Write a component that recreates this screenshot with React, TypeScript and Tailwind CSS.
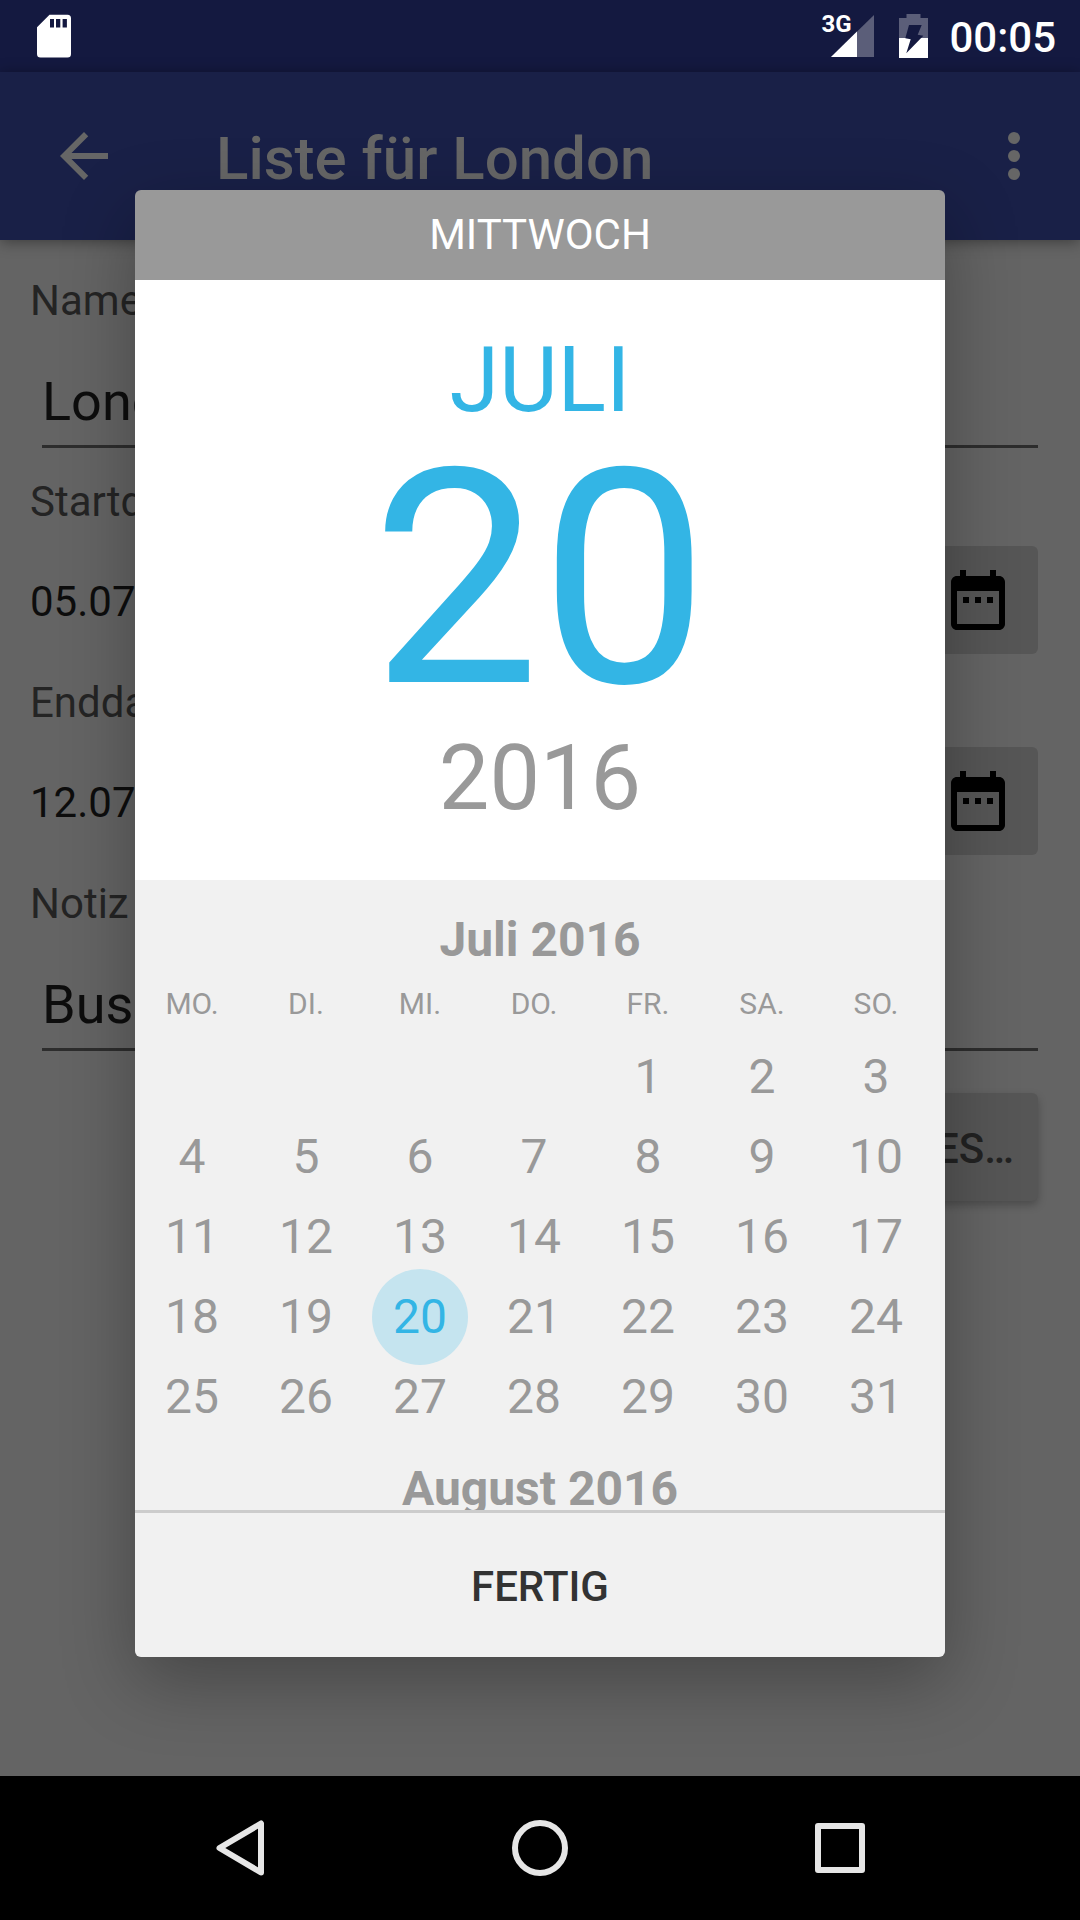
import type { ReactNode } from "react";

const WEEKDAYS = ["MO.", "DI.", "MI.", "DO.", "FR.", "SA.", "SO."];
const FIRST_WEEKDAY = 4;
const DAYS_IN_MONTH = 31;
const SELECTED_DAY = 20;

const weeks: (number | null)[][] = [];
for (let start = 1 - FIRST_WEEKDAY; start <= DAYS_IN_MONTH; start += 7) {
  weeks.push(
    WEEKDAYS.map((_, i) => {
      const day = start + i;
      return day >= 1 && day <= DAYS_IN_MONTH ? day : null;
    }),
  );
}

function StatusBar() {
  return (
    <div className="flex h-[72px] items-center bg-[#141940] pl-9 pr-6 text-white">
      <svg className="h-11 w-9" viewBox="0 0 36 44" aria-hidden="true">
        <path
          d="M13.5 0.7H31.5A3.5 3.5 0 0 1 35 4.2V40A3.5 3.5 0 0 1 31.5 43.5H4.5A3.5 3.5 0 0 1 1 40V13.2Z"
          fill="#fff"
        />
        <path d="M14 5h4v8.500h-4zM20 5h4.300v8.500h-4.300zM26.600 5h4.300v8.500h-4.300z" fill="#141940" />
      </svg>
      <div className="ml-auto flex items-center">
        <div className="relative">
          <span className="absolute -left-2.5 -top-0.5 text-[24px] font-bold leading-6">3G</span>
          <svg className="h-11 w-11" viewBox="0 0 44 44" aria-hidden="true">
            <path d="M43 1V43H0Z" fill="#5b5e79" />
            <path d="M26 17.600V43H0Z" fill="#fff" />
          </svg>
        </div>
        <svg className="ml-6 h-11 w-[30px]" viewBox="0 0 30 44" aria-hidden="true">
          <path d="M7.500 0H21.500V4H29V24H0V4H7.500Z" fill="#5b5e79" />
          <path d="M0 24H29V44H0Z" fill="#fff" />
          <path d="M10 11H22.700L18.700 20.700L24.300 21.700L7.300 39.300L11.700 25.300L6.300 24.300Z" fill="#141940" />
        </svg>
        <span className="ml-5 pt-1 text-[42px] font-medium leading-[48px]">00:05</span>
      </div>
    </div>
  );
}

function AppBar() {
  return (
    <header className="relative flex h-[168px] items-center bg-[#192047] pl-12 pr-[30px] text-[#666] shadow-[0_2px_14px_rgba(0,0,0,0.4)]">
      <button type="button" aria-label="Zurück">
        <svg className="size-[72px]" viewBox="0 0 24 24" fill="currentColor" aria-hidden="true">
          <path d="M20 11H7.830l5.590-5.590L12 4l-8 8 8 8 1.410-1.410L7.830 13H20v-2z" />
        </svg>
      </button>
      <h1 className="ml-24 flex-1 truncate pt-1.5 text-[60px] font-medium leading-[72px]">
        Liste für London
      </h1>
      <button type="button" aria-label="Weitere Optionen">
        <svg className="size-[72px]" viewBox="0 0 24 24" fill="currentColor" aria-hidden="true">
          <circle cx="12" cy="6" r="2" />
          <circle cx="12" cy="12" r="2" />
          <circle cx="12" cy="18" r="2" />
        </svg>
      </button>
    </header>
  );
}

function TextField({ id, label, value }: { id: string; label: string; value: string }) {
  return (
    <div className="flex flex-col">
      <label htmlFor={id} className="text-[42px] leading-[48px] text-[#242424]">
        {label}
      </label>
      <input
        id={id}
        type="text"
        defaultValue={value}
        className="mx-3 mt-11 h-[79px] border-b-[3px] border-[#2d2d2d] bg-transparent pb-3 text-[54px] leading-[64px] text-[#0d0d0d] outline-none"
      />
    </div>
  );
}

function DateField({ label, value }: { label: string; value: string }) {
  return (
    <div>
      <div className="text-[42px] leading-[48px] text-[#242424]">{label}</div>
      <div className="mt-5 flex items-center justify-between pr-3">
        <span className="pt-1 text-[42px] leading-[48px] text-[#0d0d0d]">{value}</span>
        <button
          type="button"
          aria-label={`${label} wählen`}
          className="flex h-[108px] items-center rounded-md bg-[#565656] px-6"
        >
          <svg className="size-[72px]" viewBox="0 0 24 24" fill="#000" aria-hidden="true">
            <path d="M9 11H7v2h2v-2zm4 0h-2v2h2v-2zm4 0h-2v2h2v-2zm2-7h-1V2h-2v2H8V2H6v2H5c-1.110 0-1.990.9-1.990 2L3 20c0 1.100.89 2 2 2h14c1.100 0 2-.9 2-2V6c0-1.100-.9-2-2-2zm0 16H5V9h14v11z" />
          </svg>
        </button>
      </div>
    </div>
  );
}

function TripForm() {
  return (
    <form className="px-[30px] pt-[37px]">
      <TextField id="name" label="Name" value="London" />
      <div className="mt-[30px]">
        <DateField label="Startdatum" value="05.07.2016" />
      </div>
      <div className="mt-[25px]">
        <DateField label="Enddatum" value="12.07.2016" />
      </div>
      <div className="mt-[25px]">
        <TextField id="note" label="Notiz" value="Business" />
      </div>
      <div className="mt-[42px] flex justify-end pr-3">
        <button
          type="button"
          className="h-[108px] rounded-md bg-[#565656] px-6 pt-0.5 text-[42px] font-medium text-[#222] shadow-[0_4px_8px_rgba(0,0,0,0.25)]"
        >
          WEITERES…
        </button>
      </div>
    </form>
  );
}

function MonthTitle({ children }: { children: ReactNode }) {
  return <h2 className="text-center text-[48px] font-bold leading-[56px]">{children}</h2>;
}

function Calendar() {
  return (
    <div className="h-[630px] overflow-hidden bg-[#f1f1f1] pt-8 text-[#999]">
      <MonthTitle>Juli 2016</MonthTitle>
      <div className="mt-[18px] pr-3">
        <table className="w-full table-fixed text-center">
          <thead>
            <tr>
              {WEEKDAYS.map((day) => (
                <th key={day} scope="col" className="p-0 pb-[15px] text-[30px] font-normal leading-9">
                  {day}
                </th>
              ))}
            </tr>
          </thead>
          <tbody>
            {weeks.map((week, w) => (
              <tr key={w}>
                {week.map((day, d) => (
                  <td key={d} className="h-20 p-0">
                    {day !== null && (
                      <button
                        type="button"
                        aria-pressed={day === SELECTED_DAY}
                        className={
                          day === SELECTED_DAY
                            ? "relative mx-auto block h-20 w-24 text-[48px] leading-[80px] text-[#33b5e5]"
                            : "relative mx-auto block h-20 w-24 text-[48px] leading-[80px]"
                        }
                      >
                        {day === SELECTED_DAY && (
                          <span className="absolute inset-x-0 -inset-y-2 rounded-full bg-[#c5e4ef]" />
                        )}
                        <span className="relative">{day}</span>
                      </button>
                    )}
                  </td>
                ))}
              </tr>
            ))}
          </tbody>
        </table>
      </div>
      <div className="mt-6">
        <MonthTitle>August 2016</MonthTitle>
      </div>
    </div>
  );
}

function DatePickerDialog() {
  return (
    <div className="absolute inset-0 flex items-center justify-center pb-px">
      <div
        role="dialog"
        aria-label="Datum wählen"
        className="w-3/4 overflow-hidden rounded-md shadow-[0_24px_72px_rgba(0,0,0,0.3)]"
      >
        <div className="bg-[#999] text-center text-[42px] leading-[90px] text-white">MITTWOCH</div>
        <div className="flex h-[600px] flex-col items-center justify-center gap-1 bg-white text-[#33b5e5]">
          <div className="text-[90px] leading-[90px]">JULI</div>
          <div className="text-[300px] leading-[300px]">20</div>
          <div className="text-[90px] leading-[90px] text-[#999]">2016</div>
        </div>
        <Calendar />
        <button
          type="button"
          className="block h-[147px] w-full border-t-[3px] border-[#ccc] bg-[#f1f1f1] pt-0.5 text-[42px] font-medium text-[#333]"
        >
          FERTIG
        </button>
      </div>
    </div>
  );
}

function NavBar() {
  return (
    <nav className="relative grid h-36 grid-cols-3 place-items-center bg-black px-[90px]">
      <button type="button" aria-label="Zurück">
        <svg className="size-[60px]" viewBox="0 0 60 60" fill="none" stroke="#e6e6e6" strokeWidth="6" strokeLinejoin="round" aria-hidden="true">
          <path d="M51 5.500V54.500L9.500 30Z" />
        </svg>
      </button>
      <button type="button" aria-label="Startseite">
        <svg className="size-[60px]" viewBox="0 0 60 60" fill="none" stroke="#e6e6e6" strokeWidth="6" aria-hidden="true">
          <circle cx="30" cy="30" r="25" />
        </svg>
      </button>
      <button type="button" aria-label="Übersicht">
        <svg className="size-[60px]" viewBox="0 0 60 60" fill="none" stroke="#e6e6e6" strokeWidth="6" strokeLinejoin="round" aria-hidden="true">
          <rect x="8" y="8" width="44" height="44" />
        </svg>
      </button>
    </nav>
  );
}

export default function App() {
  return (
    <div className="flex min-h-screen flex-col bg-[#646464] font-[Roboto,sans-serif]">
      <StatusBar />
      <div className="relative flex-1">
        <AppBar />
        <TripForm />
        <DatePickerDialog />
      </div>
      <NavBar />
    </div>
  );
}
